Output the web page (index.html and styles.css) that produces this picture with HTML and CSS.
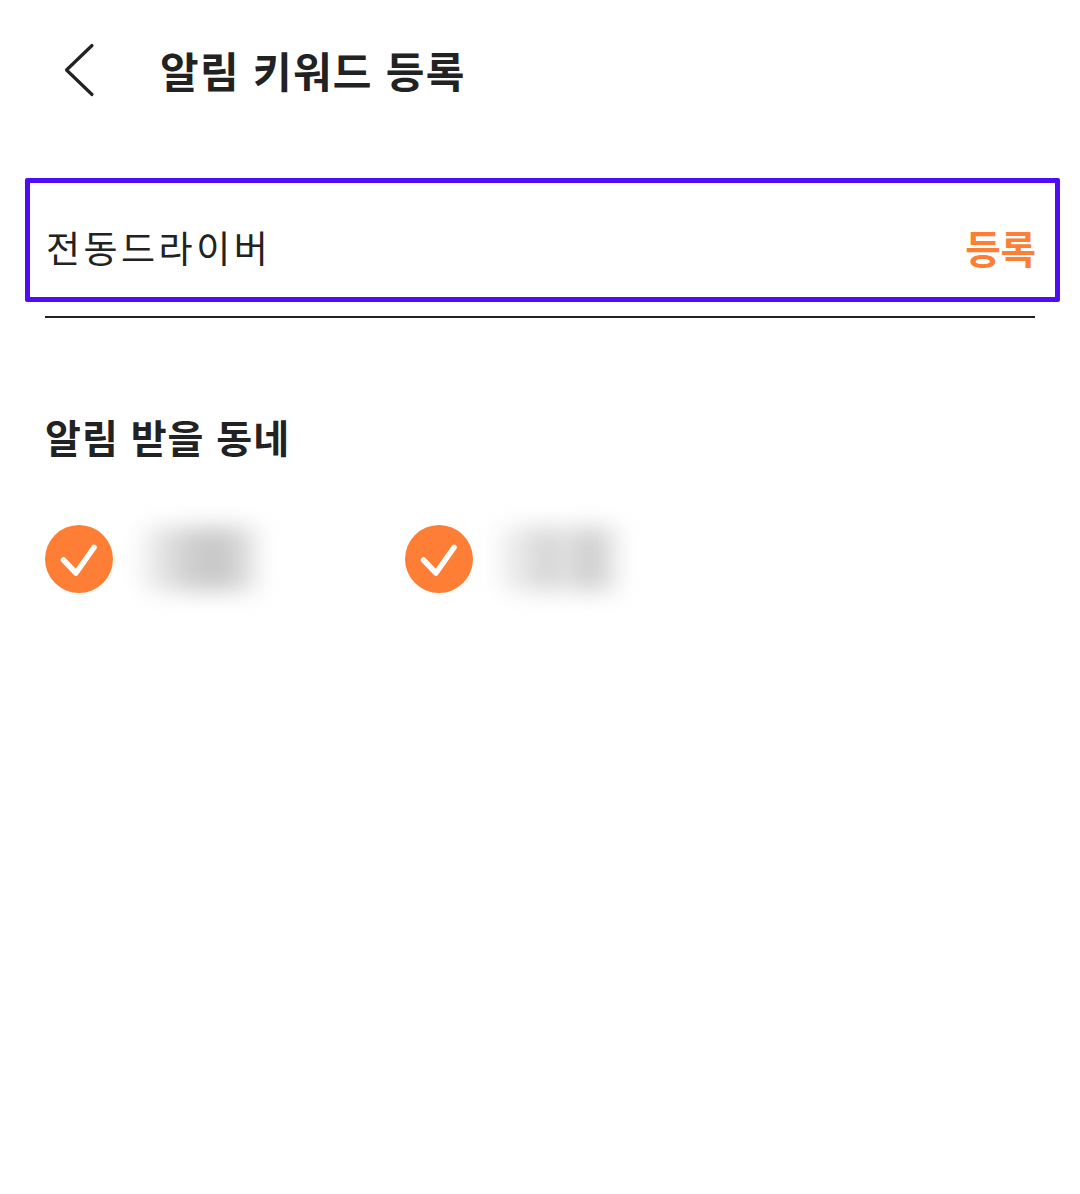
FILE: index.html
```html
<!DOCTYPE html>
<html lang="ko">
<head>
<meta charset="utf-8">
<title>알림 키워드 등록</title>
<link rel="stylesheet" href="styles.css">
</head>
<body>
<header class="header">
  <svg class="back" width="32" height="54" viewBox="0 0 32 54" aria-hidden="true"><path d="M28 2.500 2.500 27 28 51.500" fill="none" stroke="#222" stroke-width="3.200" stroke-linecap="round" stroke-linejoin="round"/></svg>
  <h1 class="title">알림 키워드 등록</h1>
</header>
<main class="content">
  <div class="field">
    <span class="keyword">전동드라이버</span>
    <span class="submit">등록</span>
  </div>
  <div class="rule"></div>
  <h2 class="subtitle">알림 받을 동네</h2>
  <div class="areas">
    <div class="area">
      <svg class="check" width="68" height="68" viewBox="0 0 68 68" aria-hidden="true"><circle cx="34" cy="34" r="34" fill="#fe7e35"/><path d="M18.500 35 31 48 49 22.500" fill="none" stroke="#fff" stroke-width="5.500" stroke-linecap="round" stroke-linejoin="round"/></svg>
      <div class="blur-box"><div class="smudge smudge-a"></div></div>
    </div>
    <div class="area">
      <svg class="check" width="68" height="68" viewBox="0 0 68 68" aria-hidden="true"><circle cx="34" cy="34" r="34" fill="#fe7e35"/><path d="M18.500 35 31 48 49 22.500" fill="none" stroke="#fff" stroke-width="5.500" stroke-linecap="round" stroke-linejoin="round"/></svg>
      <div class="blur-box"><div class="smudge smudge-b"></div></div>
    </div>
  </div>
</main>
</body>
</html>
```
FILE: styles.css
```css
* { box-sizing: border-box; }
html, body { margin: 0; padding: 0; background: #fff; }
body {
  width: 1080px;
  height: 1194px;
  overflow: hidden;
  font-family: "Noto Sans CJK KR", "Noto Sans", sans-serif;
  color: #222;
}
.header {
  display: flex;
  align-items: center;
  height: 140px;
  padding: 0 0 0 64px;
}
.back { flex: none; }
.title {
  margin: 0 0 0 64px;
  font-size: 42px;
  font-weight: 700;
  line-height: 1;
  letter-spacing: 1.3px;
  white-space: nowrap;
}
.content { padding: 38px 20px 0 25px; }
.field {
  display: flex;
  justify-content: space-between;
  align-items: center;
  height: 124px;
  padding: 14px 19px 0 16px;
  border: 5px solid #4f0cf5;
  border-radius: 2px;
}
.keyword { font-size: 37px; font-weight: 400; letter-spacing: 3.5px; white-space: nowrap; }
.submit { font-size: 38.500px; font-weight: 700; color: #fe7e35; white-space: nowrap; }
.rule { height: 2px; margin: 14px 25px 0 20px; background: #222; }
.subtitle {
  margin: 93px 0 0 20px;
  font-size: 39px;
  font-weight: 700;
  line-height: 50px;
  letter-spacing: 1px;
  white-space: nowrap;
}
.areas { display: flex; margin: 64px 0 0 20px; }
.area { display: flex; align-items: center; width: 360px; height: 68px; }
.check { flex: none; }
.blur-box {
  flex: none;
  width: 130px;
  height: 82px;
  margin-left: 22px;
  padding: 9px 5px;
}
.smudge { width: 100%; height: 100%; filter: blur(11px); }
.smudge-a { background: linear-gradient(90deg, #f6f6f6 0%, #e4e4e4 18%, #cfcfcf 40%, #c6c6c6 66%, #dcdcdc 88%, #f4f4f4 100%); }
.smudge-b { background: linear-gradient(90deg, #f2f2f2 0%, #e6e6e6 20%, #d2d2d2 42%, #e6e6e6 55%, #cbcbcb 72%, #dedede 90%, #f4f4f4 100%); }
```
